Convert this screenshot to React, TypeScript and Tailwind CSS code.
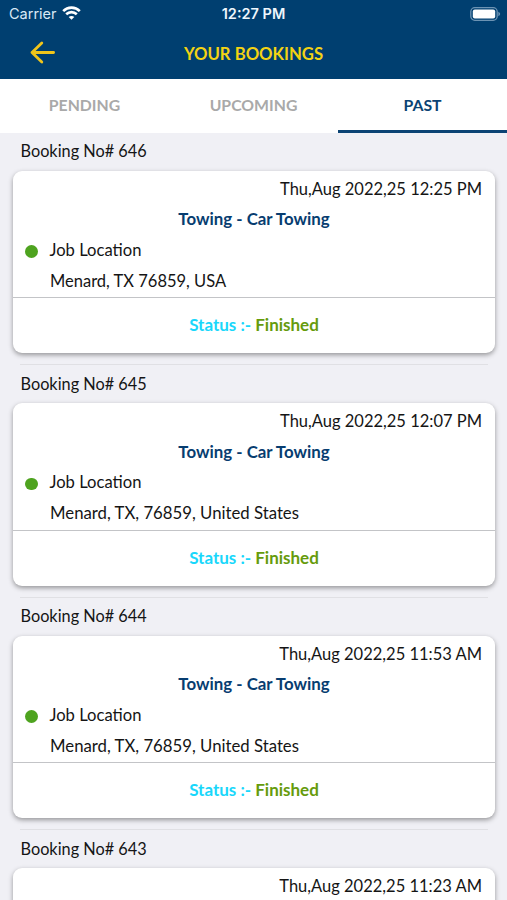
import React from "react";

type Booking = { no: number; date: string; address?: string };

const bookings: Booking[] = [
  { no: 646, date: "Thu,Aug 2022,25 12:25 PM", address: "Menard, TX 76859, USA" },
  { no: 645, date: "Thu,Aug 2022,25 12:07 PM", address: "Menard, TX, 76859, United States" },
  { no: 644, date: "Thu,Aug 2022,25 11:53 AM", address: "Menard, TX, 76859, United States" },
  { no: 643, date: "Thu,Aug 2022,25 11:23 AM" },
];

function StatusBar() {
  return (
    <div className="grid h-[27px] grid-cols-3 items-center pt-px font-['Inter',sans-serif] text-white">
      <div className="flex items-center gap-[5px] pl-[9px]">
        <span className="text-[14.5px] leading-none text-[#d9e9f6]">Carrier</span>
        <svg className="-mt-0.5" width="19" height="14" viewBox="0 0 19 14" fill="none" stroke="white" strokeWidth="2.6">
          <path d="M1.2 5.1C5.8.5 13.2.5 17.8 5.1" />
          <path d="M4.2 8.3c3-2.9 7.6-2.9 10.6 0" />
          <path d="M9.5 13.8 6.7 11c1.5-1.5 4.1-1.5 5.6 0z" fill="white" stroke="none" />
        </svg>
      </div>
      <span className="text-center text-[14.5px] leading-none font-semibold text-[#eef6fc]">12:27 PM</span>
      <div className="flex justify-end pr-[6px]">
        <svg className="-mt-px" width="31" height="14" viewBox="0 0 31 14">
          <rect x="0.8" y="0.7" width="26.4" height="12.6" rx="4" fill="none" stroke="#6c93b3" strokeWidth="1.3" />
          <rect x="2.8" y="2.4" width="22.4" height="9.2" rx="2" fill="white" />
          <path d="M28.3 4.8c2.4.8 2.4 3.6 0 4.4z" fill="#6c93b3" />
        </svg>
      </div>
    </div>
  );
}

function BookingItem({ no, date, address }: Booking) {
  return (
    <div className="h-[232.5px] shrink-0 pr-[12px] pl-[13px]">
      <div className="flex h-[37.5px] items-center pb-px pl-[7.5px]">
        <span className="text-[16.3px]">Booking No# {no}</span>
      </div>
      <div className="h-[182.5px] rounded-[9px] bg-white shadow-[0_2px_5px_rgba(0,0,0,0.38)]">
        <div className={address ? "h-[127.5px] border-b-[1.5px] border-[#c3c4c7] pt-[3px]" : "pt-[3px]"}>
          <div className="flex h-[31px] items-center justify-end pr-[13px] text-[16.5px]">{date}</div>
          {address && (
            <>
              <div className="flex h-[30.5px] items-center justify-center text-[16.85px] font-bold text-[#073d70]">
                Towing - Car Towing
              </div>
              <div className="flex h-[30.5px] items-center gap-3 pl-3 text-[16.6px]">
                <span className="mt-[2px] size-[12.5px] rounded-full bg-[#4ea31f]" />
                <span>Job Location</span>
              </div>
              <div
                className={
                  address.endsWith("USA")
                    ? "flex h-[31px] items-center pl-[37px] text-[16.5px]"
                    : "flex h-[31px] items-center pl-[37px] text-[16.75px]"
                }
              >
                {address}
              </div>
            </>
          )}
        </div>
        {address && (
          <div className="flex h-[55px] items-center justify-center gap-1 pb-[2px] text-[17px] font-bold">
            <span className="text-[#19d7fb]">Status :-</span>
            <span className="text-[#669b0c]">Finished</span>
          </div>
        )}
      </div>
      <div className="mx-[7px] mt-[11px] h-px bg-[#e0e0e4]" />
    </div>
  );
}

export default function App() {
  return (
    <div className="flex h-[900px] w-[507px] flex-col overflow-hidden bg-[#f0f0f5] font-['Lato',sans-serif] text-[16px] leading-none text-[#151515]">
      <header className="h-[79px] shrink-0 bg-[#003f70]">
        <StatusBar />
        <div className="grid h-[52px] grid-cols-[60px_1fr_60px] items-center">
          <svg className="ml-[30px]" width="26" height="24" viewBox="0 0 26 24" fill="none" stroke="#f0c51b" strokeWidth="2.8" strokeLinecap="round" strokeLinejoin="round">
            <path d="M23.6 11.5H2M11.8 2 2 11.5 11.8 21" />
          </svg>
          <span className="pt-[2px] text-center text-[16.7px] font-bold text-[#f3d313]">YOUR BOOKINGS</span>
        </div>
      </header>
      <nav className="grid h-[54px] shrink-0 grid-cols-3 bg-white text-center text-[15.8px] font-bold text-[#a9a9a9]">
        <div className="flex items-center justify-center border-b-[3px] border-transparent">PENDING</div>
        <div className="flex items-center justify-center border-b-[3px] border-transparent">UPCOMING</div>
        <div className="flex items-center justify-center border-b-[3px] border-[#0b4374] text-[#0b4374]">PAST</div>
      </nav>
      <main className="flex flex-col">
        {bookings.map((b) => (
          <BookingItem key={b.no} {...b} />
        ))}
      </main>
    </div>
  );
}
